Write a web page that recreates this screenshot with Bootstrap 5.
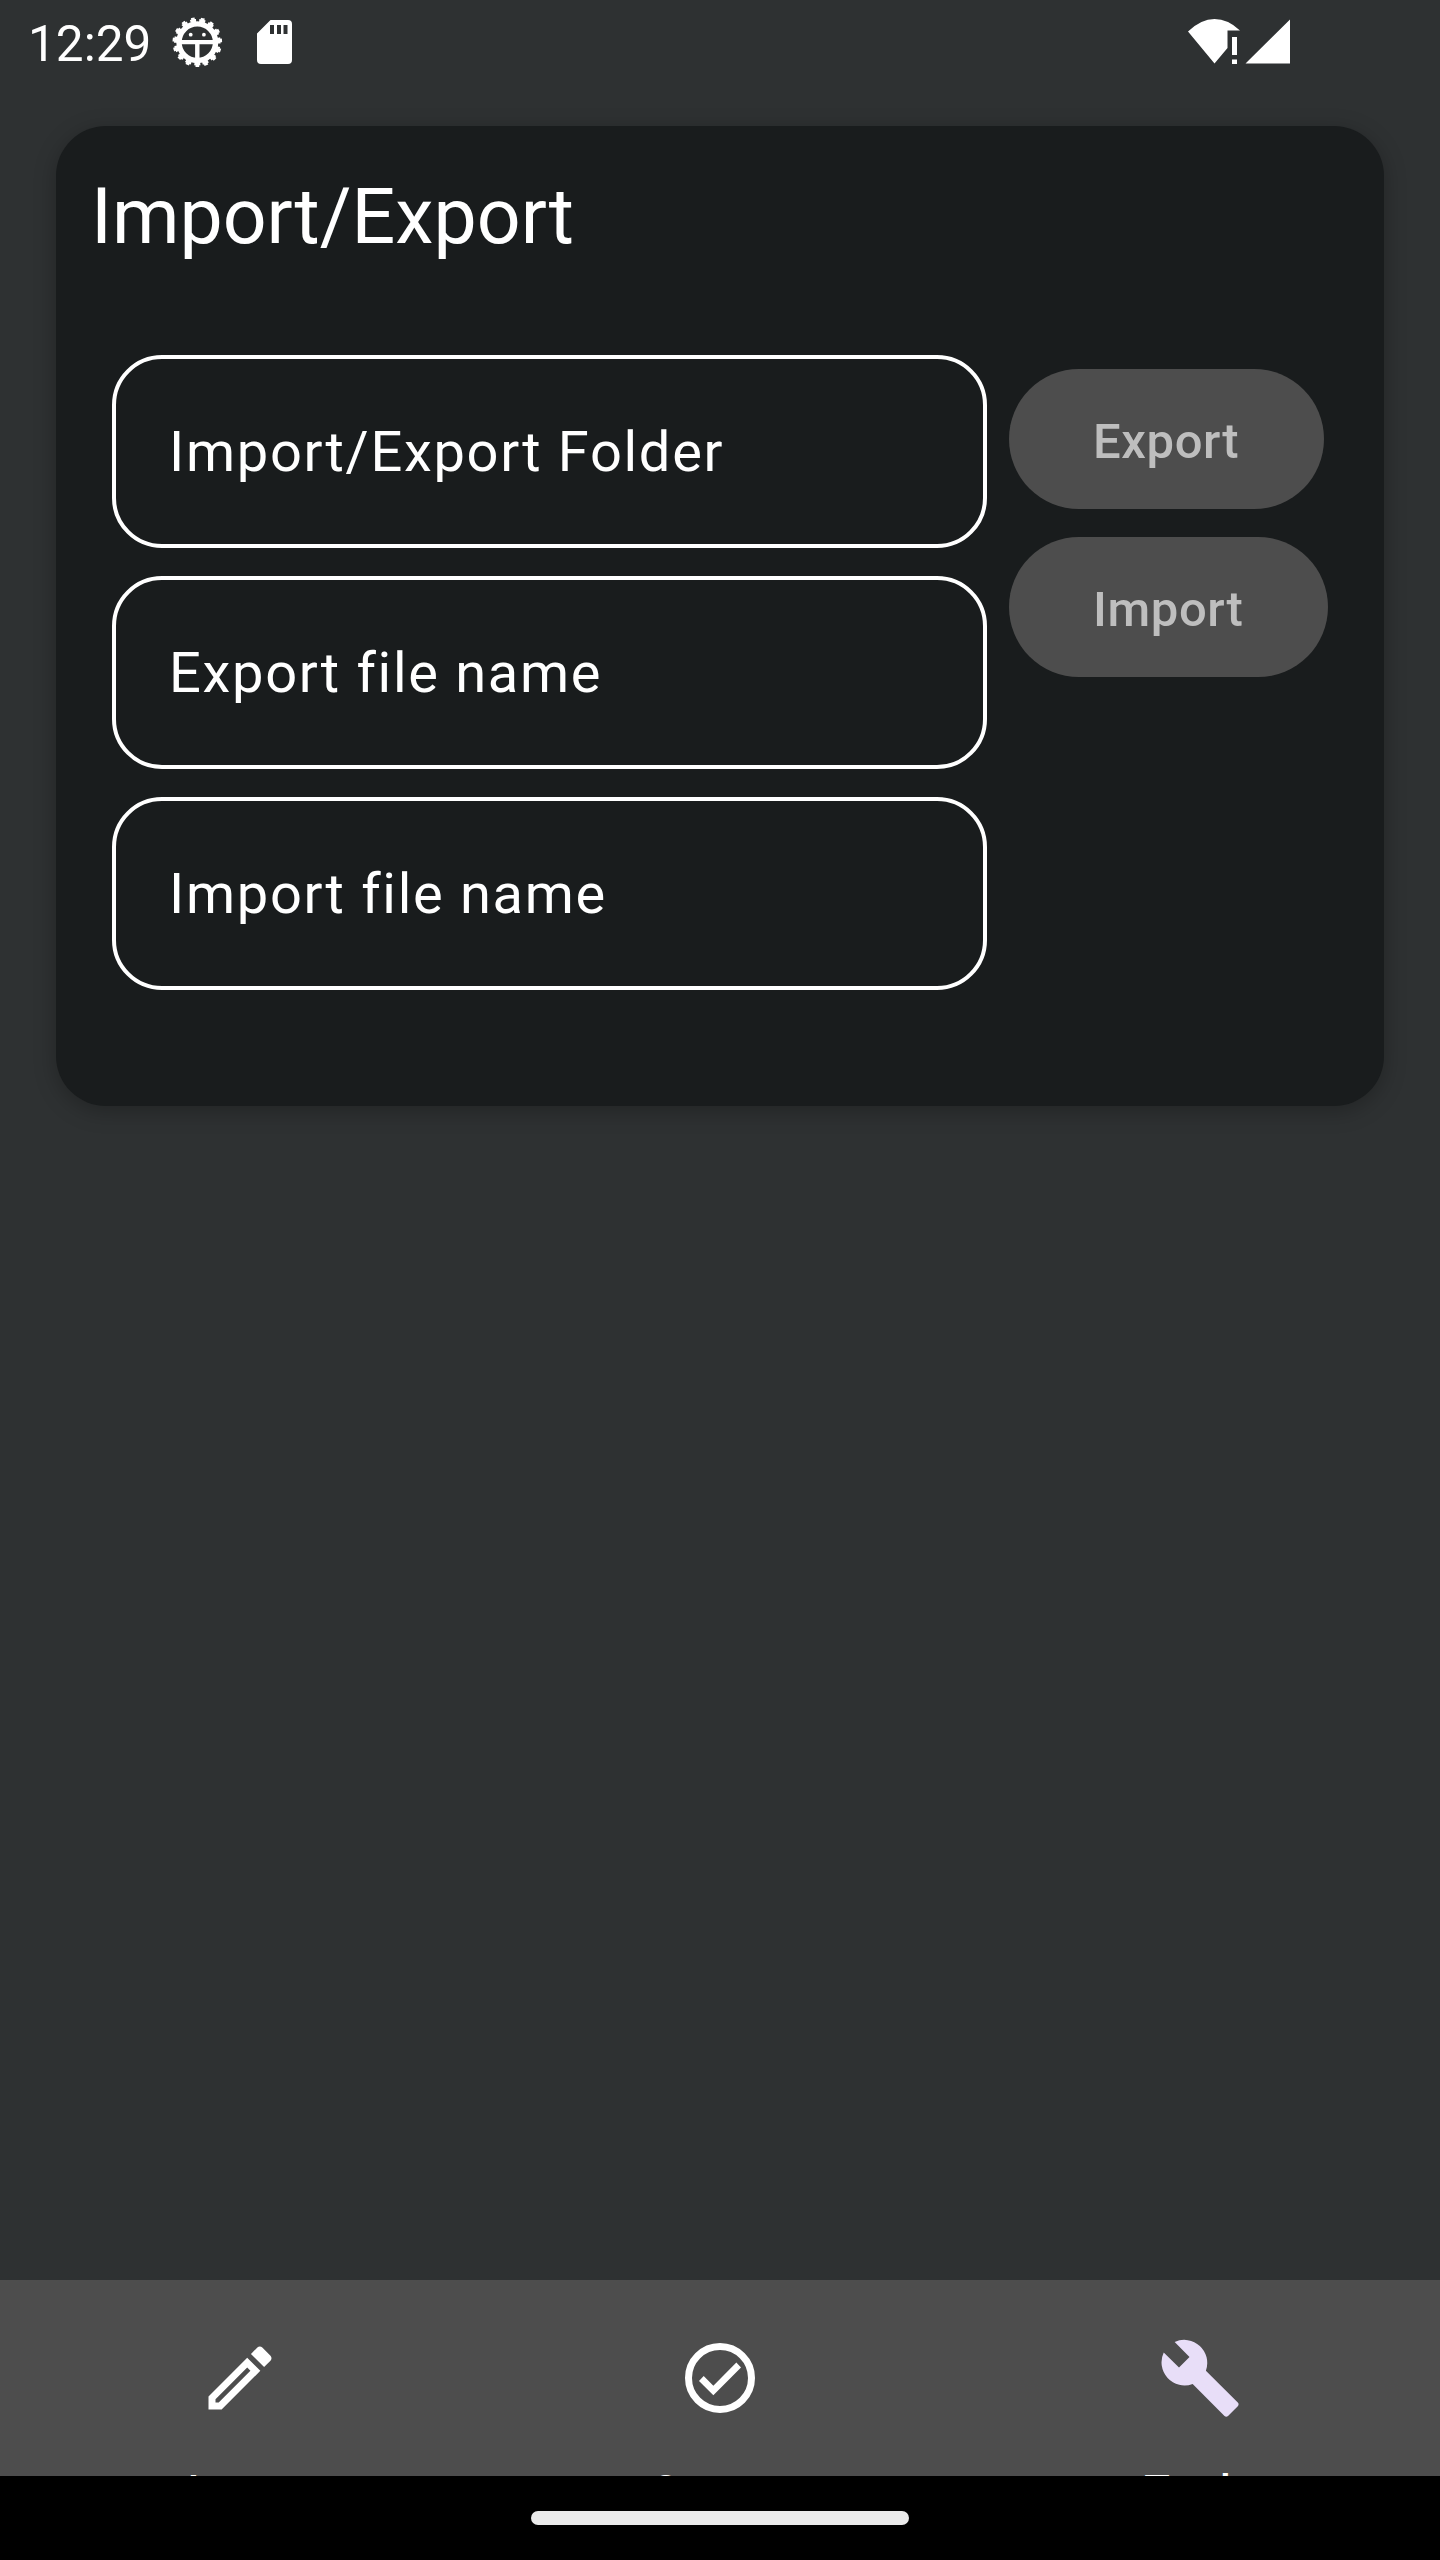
<!DOCTYPE html>
<html lang="en">
<head>
<meta charset="utf-8">
<meta name="viewport" content="width=device-width, initial-scale=1">
<title>Import/Export</title>
<link href="https://cdn.jsdelivr.net/npm/bootstrap@5.3.0/dist/css/bootstrap.min.css" rel="stylesheet">
<style>
body{font-family:Roboto,"Noto Sans",sans-serif;background:#2e3132;color:#fff}
.screen{width:1440px;height:2560px}
.statusbar{height:126px;padding:0 0 0 28px}
.clock{font-size:49.5px;line-height:88px;width:130px}
.statusbar svg{display:block}
.panel{margin:0 56px;height:980px;border:0;border-radius:50px;background:#191c1d;color:#fff;box-shadow:0 5px 22px rgba(0,0,0,.26)}
.panel-title{font-size:77px;line-height:98px;margin:42px 0 0 35px;font-weight:400}
.panel-form{padding:89px 0 0 56px;gap:22px}
.fields{gap:28px;width:875px}
.fields .form-control{height:193px;border:4px solid #fff;border-radius:50px;background:transparent;color:#fff;font-size:56px;letter-spacing:1.7px;padding:0 52px 0 53px}
.fields .form-control::placeholder{color:#fff;opacity:1}
.actions{gap:28px;padding-top:14px}
.actions .btn{height:140px;padding:5px 84.500px 0 84px;border:0;background:#4d4d4d;color:#bebebe;font-size:49px;font-weight:500;letter-spacing:.6px;opacity:1}
.tabs{height:196px;background:#4d4d4d}
.tab{color:#fff;font-size:42px;font-weight:500;letter-spacing:1.75px;line-height:56px;padding-top:56px;gap:43px;text-decoration:none}
.tab svg{width:84px;height:84px;flex:none}
.sysnav{height:84px;background:#000}
.pill{width:378px;height:14px;border-radius:7px;background:#ebebeb}
</style>
</head>
<body>
<div class="screen d-flex flex-column overflow-hidden">
  <header class="statusbar d-flex align-items-start flex-shrink-0">
    <span class="clock">12:29</span>
    <svg width="1282" height="88" viewBox="158 0 1282 88" fill="#fff">
      <g transform="translate(197.3 42.200)">
        <g fill="none" stroke="#fff">
          <circle r="18.300" stroke-width="5.400"/>
          <circle r="21.800" stroke-width="3" stroke-dasharray="6 3.131" transform="rotate(82.100)"/>
          <circle r="23.700" stroke-width="2.200" stroke-dasharray="3.700 6.228" transform="rotate(85.500)"/>
        </g>
        <path d="M-17-2.200h34v4.200h-34zM-2.200 0h4.400v18h-4.400z"/>
        <circle cx="-6.600" cy="-7.500" r="1.900"/><circle cx="6.600" cy="-7.500" r="1.900"/>
      </g>
      <path fill-rule="evenodd" d="M270.500 20H288q4 0 4 4v36q0 4-4 4h-27q-4 0-4-4V33.500zM270 25v9h4v-9zm7 0v9h4v-9zm6.500 0v9h4v-9z"/>
      <path d="M1188 31.500Q1201 19 1214.500 19T1240 30.500H1227.500V48L1214.500 63.500zM1232 37h5v18h-5zm0 22.500h5v4.500h-5zM1245.500 63.500 1290 19.500v44z"/>
    </svg>
  </header>
  <main class="flex-grow-1">
    <section class="card panel">
      <h1 class="panel-title">Import/Export</h1>
      <form class="panel-form d-flex align-items-start">
        <div class="fields d-flex flex-column">
          <input class="form-control" placeholder="Import/Export Folder">
          <input class="form-control" placeholder="Export file name">
          <input class="form-control" placeholder="Import file name">
        </div>
        <div class="actions d-flex flex-column align-items-start">
          <button type="button" class="btn rounded-pill" disabled>Export</button>
          <button type="button" class="btn rounded-pill" disabled>Import</button>
        </div>
      </form>
    </section>
  </main>
  <nav class="tabs d-flex overflow-hidden flex-shrink-0">
    <a class="tab col-4 d-flex flex-column align-items-center">
      <svg viewBox="0 0 24 24" fill="currentColor"><path d="M14.060 9.020l.92.92L5.920 19H5v-.92l9.060-9.060M17.660 3c-.25 0-.51.1-.7.29l-1.830 1.830 3.750 3.750 1.830-1.830c.39-.39.39-1.020 0-1.410l-2.340-2.340c-.2-.2-.45-.29-.71-.29zm-3.600 3.190L3 17.250V21h3.750L17.810 9.940l-3.750-3.750z"/></svg>
      <span>Input</span>
    </a>
    <a class="tab col-4 d-flex flex-column align-items-center">
      <svg viewBox="0 0 24 24"><circle cx="12" cy="12" r="9" fill="none" stroke="currentColor" stroke-width="2"/><path fill="currentColor" d="M16.670 7.600 10.100 14.200 7.350 11.450 6 12.850 10.100 16.900 18 9z"/></svg>
      <span>Output</span>
    </a>
    <a class="tab col-4 d-flex flex-column align-items-center">
      <svg viewBox="0 0 24 24" fill="#e8def8"><path d="M4.760 1.700A6.570 6.570 0 0 1 13.680 9.900L22.800 19q.45.450 0 1.050L20 22.850q-.5.450-1 0L9.900 13.680A6.570 6.570 0 0 1 1.640 4.720L6 9 9 6z"/></svg>
      <span>Tools</span>
    </a>
  </nav>
  <footer class="sysnav d-flex align-items-center justify-content-center flex-shrink-0"><div class="pill"></div></footer>
</div>
<script src="https://cdn.jsdelivr.net/npm/bootstrap@5.3.0/dist/js/bootstrap.bundle.min.js"></script>
</body>
</html>
